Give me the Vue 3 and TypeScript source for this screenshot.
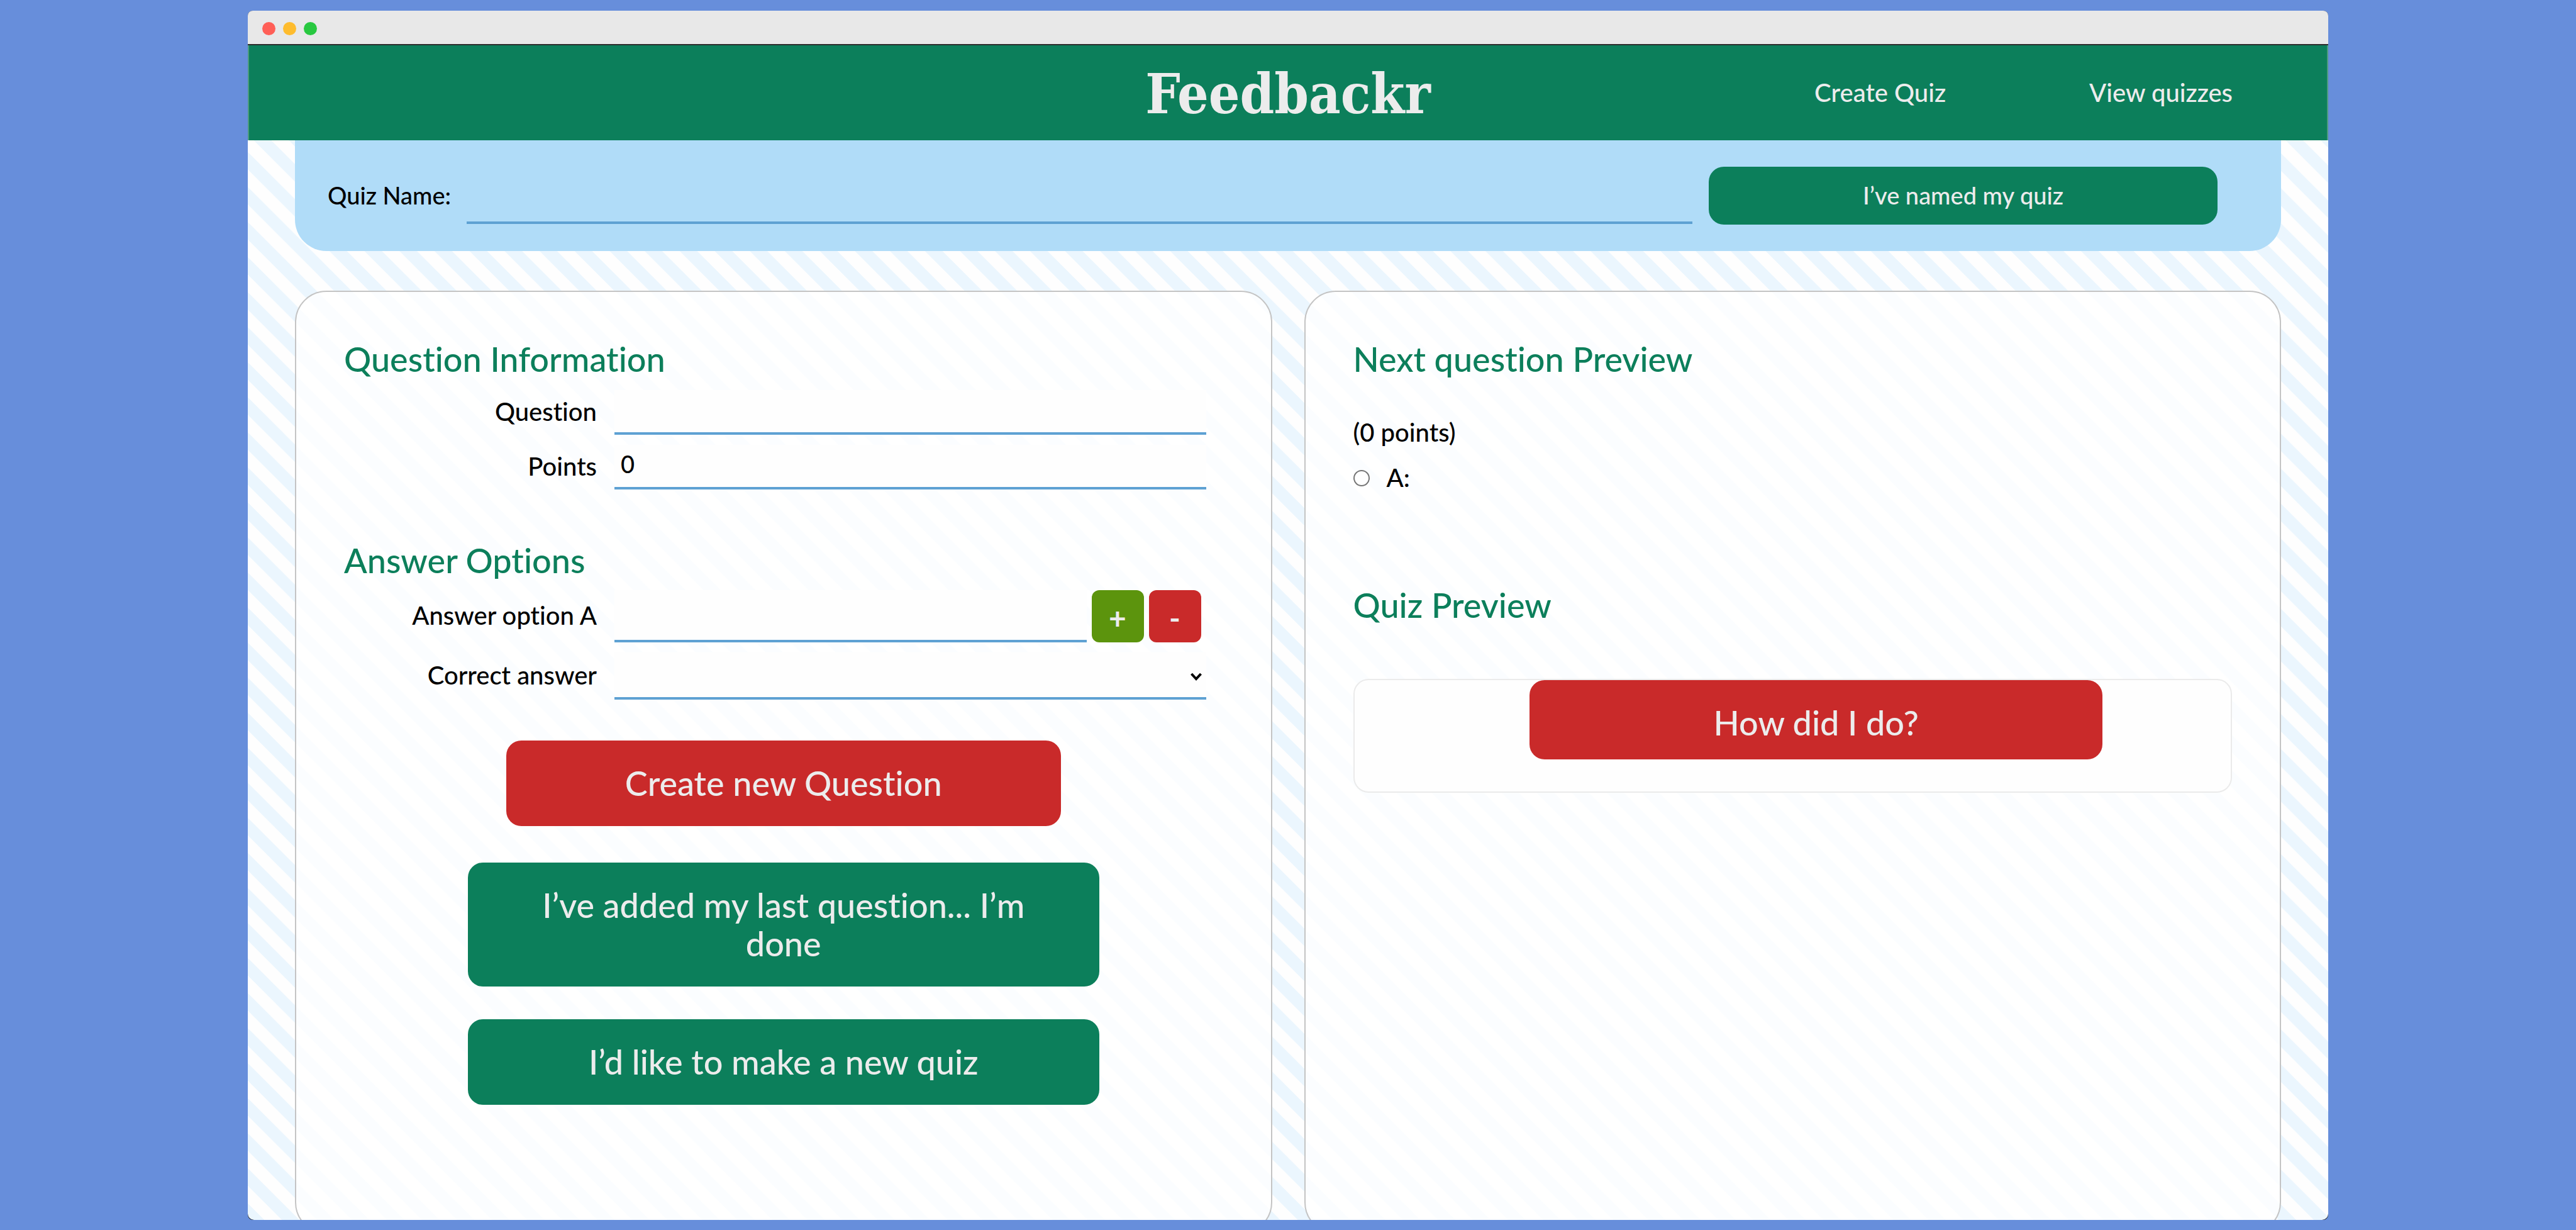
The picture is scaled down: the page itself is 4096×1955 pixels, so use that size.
<script setup lang="ts">
import { computed, ref } from 'vue'

interface AnswerOption {
  letter: string
  text: string
}

const quizName = ref('')
const question = ref('')
const points = ref('0')
const correct = ref('')
const answers = ref<AnswerOption[]>([{ letter: 'A', text: '' }])

const pointsLabel = computed(() => `(${points.value} points)`)

function addAnswer(): void {
  const letter = String.fromCharCode(65 + answers.value.length)
  answers.value.push({ letter, text: '' })
}

function removeAnswer(): void {
  if (answers.value.length > 1) answers.value.pop()
}
</script>

<template>
  <div class="desktop">
    <div class="window">
      <div class="titlebar">
        <span class="dot close"></span>
        <span class="dot minimise"></span>
        <span class="dot maximise"></span>
      </div>

      <header class="header">
        <h1 class="logo">Feedbackr</h1>
        <nav class="nav">
          <a href="#create">Create Quiz</a>
          <a href="#view">View quizzes</a>
        </nav>
      </header>

      <main class="page">
        <form class="name-bar" @submit.prevent>
          <label for="quiz-name">Quiz Name:</label>
          <input id="quiz-name" v-model="quizName" class="field" type="text" />
          <button class="name-button" type="submit">I’ve named my quiz</button>
        </form>

        <div class="panels">
          <section class="panel">
            <h2>Question Information</h2>
            <div class="rows question-rows">
              <label for="question">Question</label>
              <input id="question" v-model="question" class="field" type="text" />
              <label for="points">Points</label>
              <input id="points" v-model="points" class="field" type="text" />
            </div>

            <h2>Answer Options</h2>
            <div class="rows answer-rows">
              <template v-for="answer in answers" :key="answer.letter">
                <label :for="`answer-${answer.letter}`">Answer option {{ answer.letter }}</label>
                <div class="answer">
                  <input :id="`answer-${answer.letter}`" v-model="answer.text" class="field" type="text" />
                  <button class="square add" type="button" @click="addAnswer">+</button>
                  <button class="square remove" type="button" @click="removeAnswer">-</button>
                </div>
              </template>
              <label for="correct">Correct answer</label>
              <div class="select-wrap">
                <select id="correct" v-model="correct" class="field">
                  <option value=""></option>
                  <option v-for="answer in answers" :key="answer.letter">{{ answer.letter }}</option>
                </select>
                <svg class="chevron" viewBox="0 0 18 13" aria-hidden="true">
                  <path d="M1.5 2 9 10 16.5 2" fill="none" stroke="#000" stroke-width="4" />
                </svg>
              </div>
            </div>

            <div class="actions">
              <button class="big red create" type="button">Create new Question</button>
              <button class="big green" type="button">I’ve added my last question... I’m done</button>
              <button class="big green" type="button">I’d like to make a new quiz</button>
            </div>
          </section>

          <section class="panel">
            <h2>Next question Preview</h2>
            <p class="points">{{ pointsLabel }}</p>
            <label v-for="answer in answers" :key="answer.letter" class="choice">
              <input type="radio" name="preview" />
              <span>{{ answer.letter }}: {{ answer.text }}</span>
            </label>

            <h2 class="quiz-heading">Quiz Preview</h2>
            <div class="quiz-box">
              <button class="big red score" type="button">How did I do?</button>
            </div>
          </section>
        </div>
      </main>
    </div>
  </div>
</template>

<style>
body {
  margin: 0;
  background: #678edb;
}
</style>

<style scoped>
* {
  box-sizing: border-box;
}

.desktop {
  height: 100vh;
  padding: 17px 394px 16px;
  background: #678edb;
  font-family: Lato, "Open Sans", sans-serif;
  font-size: 40px;
  font-variant-ligatures: none;
  font-weight: 500;
  line-height: 48px;
  color: #000;
}

.window {
  display: flex;
  flex-direction: column;
  height: 100%;
  overflow: hidden;
  border-radius: 8px;
  background: #2b2b2b;
}

.titlebar {
  display: flex;
  flex: none;
  gap: 12px;
  padding: 18px 23px 14px;
  border-bottom: 2px solid #2b2b2b;
  background: #e8e8e8;
}

.dot {
  width: 21px;
  height: 21px;
  border-radius: 50%;
}

.close {
  background: #ff5f57;
}

.minimise {
  background: #febc2e;
}

.maximise {
  background: #28c840;
}

.header {
  display: grid;
  flex: none;
  grid-template-columns: 1fr auto 1fr;
  align-items: center;
  height: 151px;
  padding: 0 152px;
  background: #0c7f5b;
  box-shadow: inset 2px 0 #4d9a80, inset -2px 0 #4d9a80;
  color: #ececec;
}

.logo {
  grid-column: 2;
  margin: 0;
  padding-top: 4px;
  font-family: "DejaVu Serif Condensed", "DejaVu Serif", serif;
  font-size: 87px;
  font-weight: 700;
  line-height: 100px;
}

.nav {
  display: flex;
  justify-content: flex-end;
  gap: 228px;
  padding-bottom: 2px;
}

.nav a {
  color: inherit;
  text-decoration: none;
}

.page {
  flex: 1;
  min-height: 0;
  padding: 0 75px;
  overflow: hidden;
  border-radius: 0 0 10px 10px;
  background-color: #fefefe;
  background-image: linear-gradient(
    45deg,
    #fefefe 25%,
    #ebf6fe 25%,
    #ebf6fe 50%,
    #fefefe 50%,
    #fefefe 75%,
    #ebf6fe 75%
  );
  background-position: 0 18px;
  background-size: 1.36vw 1.36vw;
}

.name-bar {
  display: grid;
  grid-template-columns: 195px 1fr 809px;
  gap: 26px;
  align-items: center;
  height: 176px;
  padding: 0 101px 0 52px;
  border-radius: 0 0 50px 50px;
  background: #b0dcf8;
  font-size: 38px;
}

.name-bar label {
  padding-bottom: 2px;
  white-space: nowrap;
}

.field {
  display: block;
  width: 100%;
  height: 71px;
  margin: 0;
  padding: 0 10px 8px;
  border: 0;
  border-bottom: 4px solid #5ea1d3;
  border-radius: 0;
  outline: 0;
  appearance: none;
  background: #fefefe;
  color: #000;
  font: inherit;
  font-size: 38px;
}

.name-bar .field {
  height: 90px;
  background: transparent;
}

button {
  margin: 0;
  border: 0;
  color: #ececec;
  font: inherit;
  font-variant-ligatures: none;
  cursor: pointer;
}

.name-button {
  height: 92px;
  padding: 0 0 2px;
  border-radius: 24px;
  background: #0c7f5b;
  font-size: 38px;
}

.panels {
  display: grid;
  grid-template-columns: 1fr 1fr;
  gap: 51px;
  padding-top: 63px;
}

.panel {
  min-height: 1499px;
  padding: 76px;
  border: 2px solid #c4c4c4;
  border-radius: 50px;
  background: rgba(255, 255, 255, 0.8);
}

h2 {
  margin: 0;
  color: #0c7f5b;
  font-size: 54px;
  font-weight: 500;
  line-height: 61px;
}

.rows {
  display: grid;
  grid-template-columns: 402px 1fr;
  gap: 16px 28px;
  align-items: center;
  padding-right: 27px;
}

.rows label {
  padding-bottom: 4px;
  text-align: right;
}

.question-rows {
  padding-top: 19px;
  padding-bottom: 82px;
}

.answer-rows {
  padding-top: 17px;
}

.answer {
  display: flex;
  gap: 8px;
  padding-right: 8px;
}

.answer .field {
  flex: 1;
  min-width: 0;
  height: 83px;
}

.square {
  width: 83px;
  height: 83px;
  padding: 4px 0 0;
  border-radius: 12px;
  font-size: 48px;
  font-weight: 700;
}

.add {
  background: #5c940d;
}

.remove {
  background: #c92a2a;
}

.select-wrap {
  position: relative;
}

.select-wrap .field {
  height: 75px;
}

.chevron {
  position: absolute;
  top: 32px;
  right: 7px;
  width: 18px;
  height: 13px;
  pointer-events: none;
}

.actions {
  display: flex;
  flex-direction: column;
  align-items: center;
  gap: 52px;
  padding-top: 65px;
}

.big {
  width: 1004px;
  padding: 37px 78px 38px;
  border-radius: 24px;
  font-size: 54px;
  line-height: 61px;
}

.red {
  background: #c92a2a;
}

.green {
  background: #0c7f5b;
}

.create {
  width: 882px;
  margin-bottom: 6px;
}

.points {
  margin: 62px 0 24px;
}

.choice {
  display: flex;
  align-items: center;
  gap: 27px;
}

.choice input {
  appearance: none;
  width: 26px;
  height: 26px;
  margin: 2px 0 0;
  border: 2px solid #767676;
  border-radius: 50%;
  background: #fff;
}

.quiz-heading {
  padding-top: 148px;
}

.quiz-box {
  margin-top: 87px;
  padding-bottom: 51px;
  border: 2px solid #ebebeb;
  border-radius: 24px;
  background: #fefefe;
}

.score {
  display: block;
  width: 911px;
  margin-left: 20%;
  padding: 37px 0 28px;
}
</style>
